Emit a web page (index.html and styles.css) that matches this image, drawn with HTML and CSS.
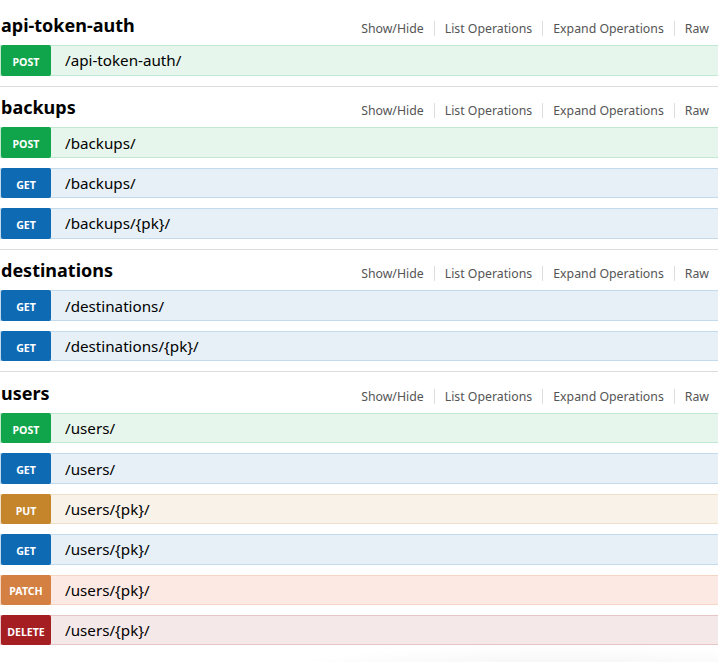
FILE: index.html
```html
<!DOCTYPE html>
<html>
<head>
<meta charset="utf-8">
<link rel="stylesheet" href="styles.css">
</head>
<body>
<div class="resources">
  <section class="resource">
    <div class="heading">
      <h2>api-token-auth</h2>
      <ul class="options"><li>Show/Hide</li><li>List Operations</li><li>Expand Operations</li><li>Raw</li></ul>
    </div>
    <ul class="operations">
      <li class="op post"><span class="method">POST</span><span class="path">/api-token-auth/</span></li>
    </ul>
  </section>
  <section class="resource">
    <div class="heading">
      <h2>backups</h2>
      <ul class="options"><li>Show/Hide</li><li>List Operations</li><li>Expand Operations</li><li>Raw</li></ul>
    </div>
    <ul class="operations">
      <li class="op post"><span class="method">POST</span><span class="path">/backups/</span></li>
      <li class="op get"><span class="method">GET</span><span class="path">/backups/</span></li>
      <li class="op get"><span class="method">GET</span><span class="path">/backups/{pk}/</span></li>
    </ul>
  </section>
  <section class="resource">
    <div class="heading">
      <h2>destinations</h2>
      <ul class="options"><li>Show/Hide</li><li>List Operations</li><li>Expand Operations</li><li>Raw</li></ul>
    </div>
    <ul class="operations">
      <li class="op get"><span class="method">GET</span><span class="path">/destinations/</span></li>
      <li class="op get"><span class="method">GET</span><span class="path">/destinations/{pk}/</span></li>
    </ul>
  </section>
  <section class="resource last">
    <div class="heading">
      <h2>users</h2>
      <ul class="options"><li>Show/Hide</li><li>List Operations</li><li>Expand Operations</li><li>Raw</li></ul>
    </div>
    <ul class="operations">
      <li class="op post"><span class="method">POST</span><span class="path">/users/</span></li>
      <li class="op get"><span class="method">GET</span><span class="path">/users/</span></li>
      <li class="op put"><span class="method">PUT</span><span class="path">/users/{pk}/</span></li>
      <li class="op get"><span class="method">GET</span><span class="path">/users/{pk}/</span></li>
      <li class="op patch"><span class="method">PATCH</span><span class="path">/users/{pk}/</span></li>
      <li class="op delete"><span class="method">DELETE</span><span class="path">/users/{pk}/</span></li>
    </ul>
  </section>
</div>
</body>
</html>
```
FILE: styles.css
```css
html {
  height: 100%;
  background: #fff radial-gradient(ellipse 380px 55px at 560px 700px, #e6e6e6 0%, #f2f2f2 45%, #ffffff 100%) no-repeat;
}
body {
  margin: 0;
  height: 100%;
  overflow: hidden;
  font-family: "Noto Sans", "Open Sans", "DejaVu Sans", sans-serif;
  color: #000;
}
.resources {
  padding-top: 4.5px;
}
.resource {
  border-bottom: 1px solid #ddd;
}
.resource.last {
  border-bottom: none;
}
.heading {
  display: flex;
  justify-content: space-between;
  align-items: center;
  height: 40.8px;
}
.heading h2 {
  margin: 0;
  padding-left: 1px;
  font-size: 18px;
  font-weight: 700;
  color: #000;
}
.options {
  list-style: none;
  display: flex;
  margin: 0;
  padding: 7px 9px 0 0;
}
.options li {
  font-size: 12.3px;
  line-height: 15px;
  color: #555;
  padding: 0 10px;
  border-right: 1px solid #ddd;
}
.options li:last-child {
  border-right: none;
  padding-right: 0;
}
.operations {
  list-style: none;
  margin: 0;
  padding: 0;
}
.op {
  display: flex;
  align-items: center;
  box-sizing: border-box;
  height: 30.4px;
  border: 1px solid;
  border-right: none;
  margin-bottom: 10px;
}
.method {
  flex-shrink: 0;
  box-sizing: border-box;
  width: 50px;
  height: 30.4px;
  margin: -1px 0;
  display: flex;
  align-items: center;
  justify-content: center;
  padding-top: 3px;
  border-radius: 2px;
  color: #fff;
  font-size: 10.6px;
  font-weight: 700;
}
.path {
  margin-left: 14px;
  font-size: 15.2px;
  color: #000;
}
.post { background: #e7f6ec; border-color: #c3e8d1; }
.post .method { background: #10a54a; }
.get { background: #e7f0f7; border-color: #c3d9ec; }
.get .method { background: #0f6ab4; }
.put { background: #f9f2e9; border-color: #f0e0ca; }
.put .method { background: #c5862b; }
.patch { background: #fce9e3; border-color: #f5d5c3; }
.patch .method { background: #d38042; }
.delete { background: #f5e8e8; border-color: #e8c6c7; }
.delete .method { background: #a41e22; }
```
